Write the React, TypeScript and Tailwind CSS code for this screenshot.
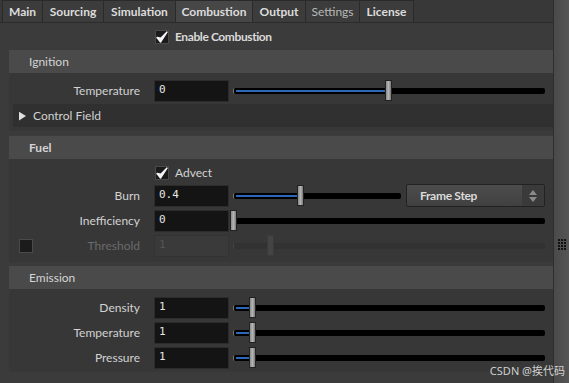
import React from "react";

const font = "font-['Lato','Open_Sans',sans-serif]";

const tabs = [
  { label: "Main", w: "w-[41px]", bold: true },
  { label: "Sourcing", w: "w-[62px]", bold: true },
  { label: "Simulation", w: "w-[73px]", bold: true },
  { label: "Combustion", w: "w-[78px]", bold: true, active: true },
  { label: "Output", w: "w-[54px]", bold: true },
  { label: "Settings", w: "w-[55px]", bold: false },
  { label: "License", w: "w-[55px]", bold: true },
];

function Check({ checked = true }: { checked?: boolean }) {
  return (
    <span className="flex h-[14px] w-[14px] items-center justify-center border border-[#4a4a4a] bg-[#1b1b1b]">
      {checked && (
        <svg viewBox="0 0 12 12" className="h-[12px] w-[12px]">
          <path d="M1 6.5 L4.5 11 L11 1 L4.8 7.2 Z" fill="#f4f4f4" stroke="#f4f4f4" strokeWidth={1.4} strokeLinejoin="round" />
        </svg>
      )}
    </span>
  );
}

function Slider({ value, disabled = false }: { value: number; disabled?: boolean }) {
  const pct = `${value * 100}%`;
  return (
    <div className="relative flex h-[22px] flex-1 items-center">
      <div
        className={`relative h-[6px] w-full rounded-[2px] border-l ${
          disabled ? "border-[#444] bg-[#323232]" : "border-[#777] bg-black"
        }`}
      >
        {!disabled && value > 0 && (
          <div className="absolute left-[2px] top-[2px] h-[2px] bg-[#2d68b8]" style={{ width: `calc(${pct} - 4px)` }} />
        )}
      </div>
      <div
        className={`absolute top-0 h-[21px] w-[7px] border ${
          disabled
            ? "border-[#3a3a3a] bg-[#444]"
            : "border-[#222] bg-gradient-to-r from-[#8a8a8a] via-[#b4b4b4] to-[#7a7a7a]"
        }`}
        style={{ left: `calc(${pct} - 3px)` }}
      />
    </div>
  );
}

function Field({ value, disabled = false }: { value: string; disabled?: boolean }) {
  return (
    <div
      className={`flex h-[22px] w-[75px] shrink-0 items-center border px-[4px] font-['DejaVu_Sans_Mono',monospace] text-[11px] ${
        disabled ? "border-[#333] bg-[#3a3a3a] text-[#555]" : "border-[#2c2c2c] bg-[#141414] text-[#e6e6e6]"
      }`}
    >
      {value}
    </div>
  );
}

function Row({
  label,
  value,
  slider,
  disabled = false,
  lead,
  children,
}: {
  label: string;
  value: string;
  slider: number;
  disabled?: boolean;
  lead?: React.ReactNode;
  children?: React.ReactNode;
}) {
  return (
    <div className="flex h-[25px] items-center pr-[8px]">
      <div className="flex w-[131px] shrink-0 items-center justify-between pl-[10px]">
        <span>{lead}</span>
        <span className={`text-[12px] ${disabled ? "text-[#6a6a6a]" : "text-[#d2d2d2]"}`}>{label}</span>
      </div>
      <div className="ml-[14px]">
        <Field value={value} disabled={disabled} />
      </div>
      <div className="ml-[4px] flex flex-1 items-center gap-[3px]">
        <Slider value={slider} disabled={disabled} />
        {children}
      </div>
    </div>
  );
}

function Header({ title, bold = false }: { title: string; bold?: boolean }) {
  return (
    <div className={`flex h-[23px] items-center bg-[#4a4a4a] pl-[20px] text-[12px] text-[#d4d4d4] ${bold ? "font-bold" : ""}`}>
      {title}
    </div>
  );
}

export default function App() {
  return (
    <div className={`relative flex h-[383px] w-[569px] overflow-hidden bg-[#3b3b3b] ${font}`}>
      <div className="flex flex-1 flex-col">
        <div className="flex h-[23px] items-end border-b border-[#2c2c2c] bg-[#383838] pl-[2px]">
          {tabs.map((t) => (
            <div
              key={t.label}
              className={`flex h-[22px] ${t.w} -ml-px first:ml-0 items-center justify-center border border-b-0 border-[#2a2a2a] text-[12px] ${
                t.active ? "bg-[#474747]" : "bg-[#3c3c3c]"
              } ${t.bold ? "font-bold text-[#dcdcdc]" : "text-[#b8b8b8]"}`}
            >
              {t.label}
            </div>
          ))}
        </div>

        <div className="flex h-[27px] items-center pl-[155px]">
          <Check />
          <span className="ml-[6px] text-[12px] font-bold tracking-[-0.4px] text-[#dadada]">Enable Combustion</span>
        </div>

        <div className="ml-[9px] bg-[#373737]">
          <Header title="Ignition" />
          <div className="pt-[5px]">
            <Row label="Temperature" value="0" slider={0.497} />
          </div>
          <div className="ml-[4px] mt-[1px] flex h-[23px] items-center bg-[#303030] pl-[6px] text-[12px] text-[#d2d2d2]">
            <svg viewBox="0 0 8 10" className="h-[10px] w-[7px]">
              <path d="M0 0 L8 5 L0 10 Z" fill="#e0e0e0" />
            </svg>
            <span className="ml-[7px]">Control Field</span>
          </div>
          <div className="h-[4px]" />
        </div>

        <div className="ml-[9px] mt-[5px] bg-[#373737]">
          <Header title="Fuel" bold />
          <div className="mt-[4px] flex h-[20px] items-center pl-[146px]">
            <Check />
            <span className="ml-[6px] text-[12px] text-[#d2d2d2]">Advect</span>
          </div>
          <Row label="Burn" value="0.4" slider={0.4}>
            <div className="ml-[2px] flex h-[23px] w-[139px] shrink-0 overflow-hidden rounded-[2px] border border-[#222] bg-gradient-to-b from-[#4d4d4d] to-[#404040]">
              <span className="flex flex-1 items-center pl-[13px] text-[12px] font-bold tracking-[-0.3px] text-[#dadada]">Frame Step</span>
              <span className="flex w-[22px] flex-col items-center justify-center gap-[2px] bg-[#3a3a3a]">
                <svg viewBox="0 0 8 5" className="h-[5px] w-[8px]">
                  <path d="M0 5 L4 0 L8 5 Z" fill="#8a8a8a" />
                </svg>
                <svg viewBox="0 0 8 5" className="h-[5px] w-[8px]">
                  <path d="M0 0 L4 5 L8 0 Z" fill="#8a8a8a" />
                </svg>
              </span>
            </div>
          </Row>
          <Row label="Inefficiency" value="0" slider={0} />
          <Row label="Threshold" value="1" slider={0.12} disabled lead={<Check checked={false} />} />
          <div className="h-[4px]" />
        </div>

        <div className="ml-[9px] mt-[4px] bg-[#373737]">
          <Header title="Emission" />
          <div className="pt-[6px]">
            <Row label="Density" value="1" slider={0.062} />
            <Row label="Temperature" value="1" slider={0.062} />
            <Row label="Pressure" value="1" slider={0.062} />
          </div>
          <div className="h-[2px]" />
        </div>
      </div>

      <div className="flex w-[16px] shrink-0 items-center justify-center border-l border-[#2e2e2e] bg-gradient-to-r from-[#4a4a4a] to-[#555]">
        <div className="mt-[105px] grid grid-cols-3 gap-[1px]">
          {Array.from({ length: 12 }).map((_, i) => (
            <span key={i} className="h-[2px] w-[2px] bg-[#111]" />
          ))}
        </div>
      </div>

      <span className="absolute bottom-[7px] right-[4px] font-['Noto_Sans','Noto_Sans_CJK_SC',sans-serif] text-[11px] leading-none text-[#cfcfcf]">
        CSDN @挨代码
      </span>
    </div>
  );
}
